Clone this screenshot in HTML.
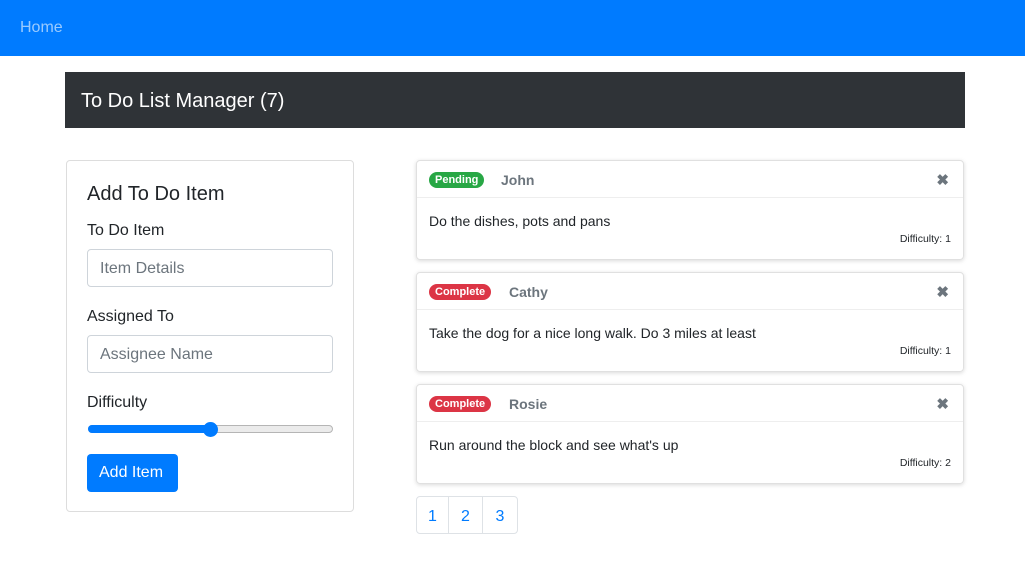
<!DOCTYPE html>
<html><head><style>
*{box-sizing:border-box;margin:0;padding:0}
body{width:1025px;height:569px;background:#fff;font-family:"Liberation Sans",sans-serif;color:#212529;position:relative;overflow:hidden}
.nav{position:absolute;left:0;top:0;width:1025px;height:56px;background:#007bff}
.nav span{position:absolute;left:20px;top:19px;color:rgba(255,255,255,.6);font-size:16px}
.hdr{position:absolute;left:65px;top:72px;width:900px;height:56px;background:#2f3337;color:#fff;font-size:20px;padding:18px 0 0 16px}
.form{position:absolute;left:66px;top:160px;width:288px;height:352px;border:1px solid #ddd;border-radius:4px}
.a{position:absolute}
.lbl{font-size:16px}
.inp{position:absolute;left:20px;width:246px;height:38px;border:1px solid #ced4da;border-radius:4px;color:#6c757d;font-size:16px;padding:10px 12px}
.btn{position:absolute;left:20px;top:293px;width:91px;height:38px;background:#007bff;color:#fff;border-radius:4px;font-size:16px;padding:10px 0 0 12px}
.card{position:absolute;left:416px;width:548px;height:100px;border:1px solid #e0e0e0;border-radius:4px;box-shadow:0 1px 4px rgba(0,0,0,.15)}
.ch{height:37px;border-bottom:1px solid #eee;position:relative}
.badge{position:absolute;left:12px;top:11px;height:16px;border-radius:8px;color:#fff;font-size:11px;font-weight:bold;padding:2px 6px 0}
.name{position:absolute;top:11px;font-size:14px;font-weight:bold;color:#6c757d}
.x{position:absolute;right:14px;top:10px;font-size:15px;color:#6c757d;font-weight:bold}
.txt{position:absolute;left:12px;top:52px;font-size:14px}
.dif{position:absolute;right:12px;top:72px;font-size:10.5px}
.pg{position:absolute;top:496px;height:38px;border:1px solid #dee2e6;color:#007bff;font-size:16px;text-align:center;padding-top:11px}
</style></head><body>
<div class="nav"><span>Home</span></div>
<div class="hdr">To Do List Manager (7)</div>
<div class="form">
<div class="a" style="left:20px;top:22px;font-size:20px">Add To Do Item</div>
<div class="a lbl" style="left:20px;top:61px">To Do Item</div>
<div class="inp" style="top:88px">Item Details</div>
<div class="a lbl" style="left:20px;top:147px">Assigned To</div>
<div class="inp" style="top:174px">Assignee Name</div>
<div class="a lbl" style="left:20px;top:233px">Difficulty</div>
<div class="a" style="left:21px;top:264px;width:245px;height:8px;border-radius:4px;background:#ebebeb;border:1px solid #b5b5b5"></div>
<div class="a" style="left:21px;top:264px;width:124px;height:8px;border-radius:4px;background:#007bff"></div>
<div class="a" style="left:136px;top:261px;width:15px;height:15px;border-radius:50%;background:#007bff"></div>
<div class="btn">Add Item</div>
</div>
<div class="card" style="top:160px"><div class="ch"><span class="badge" style="background:#28a745">Pending</span><span class="name" style="left:84px">John</span><span class="x">✖</span></div><div class="txt">Do the dishes, pots and pans</div><div class="dif">Difficulty: 1</div></div>
<div class="card" style="top:272px"><div class="ch"><span class="badge" style="background:#dc3545">Complete</span><span class="name" style="left:92px">Cathy</span><span class="x">✖</span></div><div class="txt">Take the dog for a nice long walk. Do 3 miles at least</div><div class="dif">Difficulty: 1</div></div>
<div class="card" style="top:384px"><div class="ch"><span class="badge" style="background:#dc3545">Complete</span><span class="name" style="left:92px">Rosie</span><span class="x">✖</span></div><div class="txt">Run around the block and see what's up</div><div class="dif">Difficulty: 2</div></div>
<div class="pg" style="left:416px;width:33px;border-radius:4px 0 0 4px">1</div>
<div class="pg" style="left:448px;width:35px">2</div>
<div class="pg" style="left:482px;width:36px;border-radius:0 4px 4px 0">3</div>
</body></html>
